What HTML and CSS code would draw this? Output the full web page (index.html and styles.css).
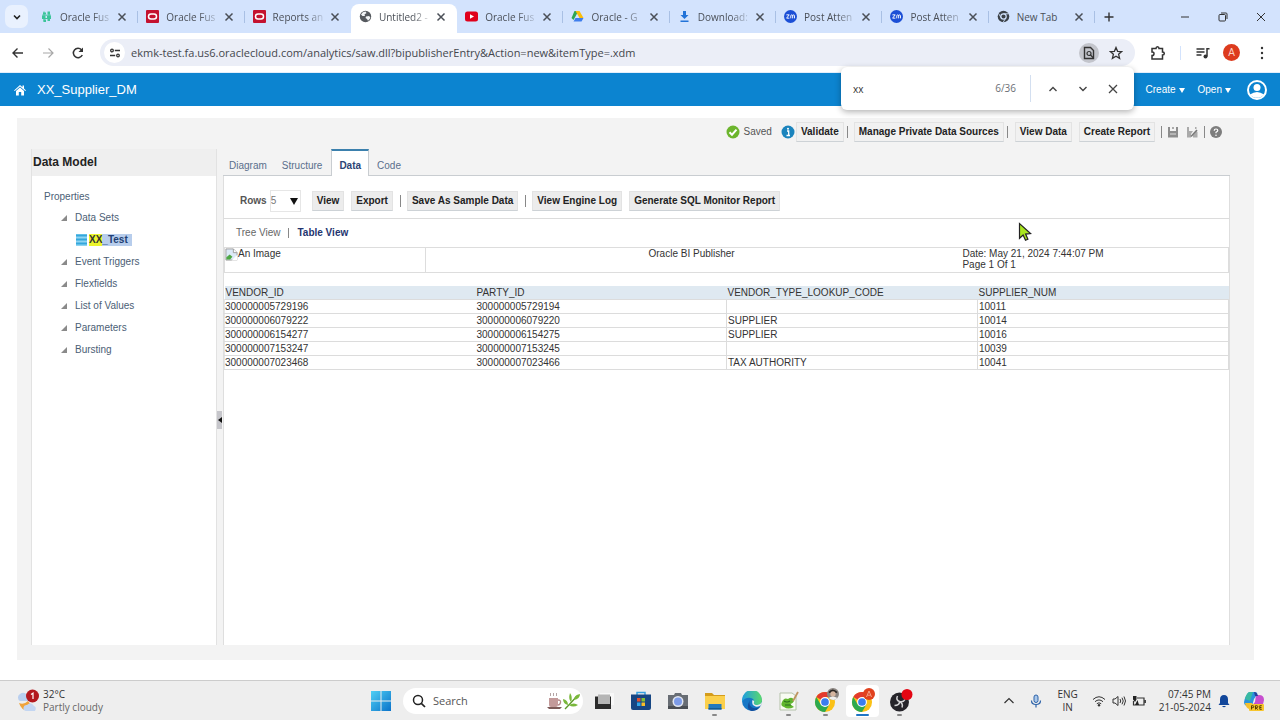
FILE: index.html
```html
<!DOCTYPE html>
<html lang="en">
<head>
<meta charset="utf-8">
<title>XX_Supplier_DM</title>
<link rel="stylesheet" href="styles.css">
</head>
<body>
<svg class="defs" aria-hidden="true">
  <symbol id="x" viewBox="0 0 12 12"><path d="M2.5 2.5l7 7M9.5 2.5l-7 7" fill="none" stroke="currentColor" stroke-width="1.5"/></symbol>
  <symbol id="oracle" viewBox="0 0 13 13"><rect width="13" height="13" rx="1" fill="#c4122f"/><rect x="2.5" y="4" width="8" height="5" rx="2.5" fill="none" stroke="#fff" stroke-width="1.5"/></symbol>
  <symbol id="zoom" viewBox="0 0 14 14"><circle cx="7" cy="7" r="7" fill="#1c4fd6"/><path d="M2.6 5.2h3L2.8 8.8h3M7.3 9V6.2q0-.9 1-.9t1 .9V9M9.3 6.2q0-.9 1-.9t1 .9V9" fill="none" stroke="#fff" stroke-width="1"/></symbol>
  <symbol id="chrome" viewBox="0 0 24 24"><circle cx="12" cy="12" r="11" fill="#fbc116"/><path d="M12 12L2.5 6.5A11 11 0 0 1 21.5 6.5H12z" fill="#e33b2e"/><path d="M2.5 6.5A11 11 0 0 0 12 23l4.8-8.3L12 12 7.3 14.700z" fill="#2da94f"/><circle cx="12" cy="12" r="5.4" fill="#fff"/><circle cx="12" cy="12" r="4.200" fill="#3b7ded"/></symbol>
  <symbol id="node" viewBox="0 0 8 8"><path d="M7 1v6H1z" fill="#8a8a8a"/></symbol>
</svg>

<header class="tabstrip">
  <button class="tab-search" aria-label="Search tabs"><svg width="10" height="10" viewBox="0 0 10 10"><path d="M2 3.500l3 3 3-3" fill="none" stroke="#222" stroke-width="1.600"/></svg></button>
  <div class="tabs">
    <div class="tab"><svg class="fav" viewBox="0 0 13 13"><path d="M3 2.500h3v2H3zM7.500 1.500h2.500v3H7.500zM2 6h3.500v2H2zM7 6h4v2H7zM3.500 9.500h2.500V12H3.500zM7.500 9h2.500v2H7.500z" fill="#3cc49a"/><path d="M4 1.500v10M9 2v9M2 5.200h9M2 8.500h9" stroke="#3cc49a"/></svg><span class="tab-title">Oracle Fus</span><button class="close" aria-label="Close tab"><svg><use href="#x"/></svg></button></div>
    <div class="tab"><svg class="fav"><use href="#oracle"/></svg><span class="tab-title">Oracle Fus</span><button class="close" aria-label="Close tab"><svg><use href="#x"/></svg></button></div>
    <div class="tab before-active"><svg class="fav"><use href="#oracle"/></svg><span class="tab-title">Reports an</span><button class="close" aria-label="Close tab"><svg><use href="#x"/></svg></button></div>
    <div class="tab active"><svg class="fav" viewBox="0 0 13 13"><circle cx="6.500" cy="6.500" r="5.700" fill="#55595e"/><path d="M2 4.500q1.500-2.800 4.500-3l1 1.500-2 1.500.5 1.500H3.500zM7 6.500l3-.5 1.300 1.200q-.3 2.500-2.300 3.500L8 9 6.500 8z" fill="#f2f4f6"/></svg><span class="tab-title">Untitled2 -</span><button class="close" aria-label="Close tab"><svg><use href="#x"/></svg></button></div>
    <div class="tab"><svg class="fav" viewBox="0 0 13 13"><rect y="1.500" width="13" height="10" rx="2.500" fill="#e0001b"/><path d="M5 4.300v4.400l4-2.200z" fill="#fff"/></svg><span class="tab-title">Oracle Fus</span><button class="close" aria-label="Close tab"><svg><use href="#x"/></svg></button></div>
    <div class="tab"><svg class="fav" viewBox="0 0 13 13"><path d="M4.500 1h4l-5 9L1.500 8z" fill="#2fa653" transform="translate(-1)"/><path d="M4.500 1h4l4 7h-4z" fill="#fbbd0a"/><path d="M4.500 8h8l-2 3.500h-8z" fill="#3f7eed"/></svg><span class="tab-title">Oracle - G</span><button class="close" aria-label="Close tab"><svg><use href="#x"/></svg></button></div>
    <div class="tab"><svg class="fav" viewBox="0 0 13 13"><path d="M5 1h3v4h2.500l-4 4-4-4H5zM2.500 10.500h8V12h-8z" fill="#2273d8"/></svg><span class="tab-title">Download:</span><button class="close" aria-label="Close tab"><svg><use href="#x"/></svg></button></div>
    <div class="tab"><svg class="fav"><use href="#zoom"/></svg><span class="tab-title">Post Atten</span><button class="close" aria-label="Close tab"><svg><use href="#x"/></svg></button></div>
    <div class="tab"><svg class="fav"><use href="#zoom"/></svg><span class="tab-title">Post Atten</span><button class="close" aria-label="Close tab"><svg><use href="#x"/></svg></button></div>
    <div class="tab"><svg class="fav" viewBox="0 0 13 13"><circle cx="6.500" cy="6.500" r="5.800" fill="#3c4248"/><circle cx="6.500" cy="6.500" r="2.700" fill="#3c4248" stroke="#d3e3fd" stroke-width="1.200"/><path d="M6.500 3.800h5.300M4.200 7.900L1.500 3.400M8.800 7.900L6.200 12.300" stroke="#d3e3fd" stroke-width=".9"/></svg><span class="tab-title whole">New Tab</span><button class="close" aria-label="Close tab"><svg><use href="#x"/></svg></button></div>
  </div>
  <button class="new-tab" aria-label="New tab"><svg width="12" height="12" viewBox="0 0 12 12"><path d="M6 1.500v9M1.500 6h9" stroke="#333" stroke-width="1.400"/></svg></button>
  <div class="window-controls">
    <button aria-label="Minimize"><svg width="10" height="10" viewBox="0 0 10 10"><path d="M1 5h8" stroke="#333"/></svg></button>
    <button aria-label="Restore"><svg width="10" height="10" viewBox="0 0 10 10"><rect x="1" y="2.500" width="6.500" height="6.500" rx="1" fill="none" stroke="#333"/><path d="M3 1h5q1 0 1 1v5" fill="none" stroke="#333"/></svg></button>
    <button aria-label="Close window"><svg width="10" height="10" viewBox="0 0 10 10"><path d="M1 1l8 8M9 1L1 9" stroke="#333"/></svg></button>
  </div>
</header>

<nav class="toolbar">
  <button aria-label="Back"><svg width="14" height="14" viewBox="0 0 14 14"><path d="M12 7H2.500M6.500 2.500L2 7l4.500 4.500" fill="none" stroke="#333" stroke-width="1.400"/></svg></button>
  <button aria-label="Forward"><svg width="14" height="14" viewBox="0 0 14 14"><path d="M2 7h9.500M7.500 2.500L12 7l-4.500 4.500" fill="none" stroke="#a8a8a8" stroke-width="1.200"/></svg></button>
  <button aria-label="Reload"><svg width="14" height="14" viewBox="0 0 14 14"><path d="M11.300 9A4.700 4.700 0 1 1 10.500 3.700L11.500 5" fill="none" stroke="#333" stroke-width="1.500"/><path d="M12 1.500V6H7.500z" fill="#333"/></svg></button>
  <div class="omnibox">
    <button class="site-info" aria-label="Site information"><svg width="12" height="12" viewBox="0 0 12 12"><g fill="none" stroke="#333" stroke-width="1.300"><circle cx="3" cy="3.500" r="1.300"/><path d="M5.800 3.500H11M1 8.500h5.200"/><circle cx="9" cy="8.500" r="1.300"/></g></svg></button>
    <input class="url" aria-label="Address" value="ekmk-test.fa.us6.oraclecloud.com/analytics/saw.dll?bipublisherEntry&amp;Action=new&amp;itemType=.xdm">
    <button class="find-chip" aria-label="Find in page"><svg width="14" height="14" viewBox="0 0 14 14"><path d="M2.500 1.500h6l3 3v8h-9z" fill="none" stroke="#333" stroke-width="1.400"/><circle cx="7" cy="7.500" r="2" fill="none" stroke="#333" stroke-width="1.200"/><path d="M8.500 9l3 3" stroke="#333" stroke-width="1.200"/></svg></button>
    <button class="star" aria-label="Bookmark"><svg width="14" height="14" viewBox="0 0 14 14"><path d="M7 1.500l1.600 3.800 4.100.3-3.100 2.700 1 4L7 10.200l-3.600 2.100 1-4L1.300 5.600l4.100-.3z" fill="none" stroke="#333" stroke-width="1.300"/></svg></button>
  </div>
  <div class="toolbar-end">
    <button aria-label="Extensions"><svg width="16" height="16" viewBox="0 0 16 16"><path d="M2 3.500h4q0-1.800 1.500-1.800T9 3.500h3.500V7q1.800 0 1.800 1.500T12.500 10v4H2v-3.500q2 0 2-1.800T2 7z" fill="none" stroke="#333" stroke-width="1.500"/></svg></button>
    <span class="bar"></span>
    <button aria-label="Media controls"><svg width="16" height="16" viewBox="0 0 16 16"><path d="M1.500 4h8M1.500 7h8M1.500 10h5M12 11.500V3.700h2.500" fill="none" stroke="#333" stroke-width="1.500"/><circle cx="10.500" cy="11.500" r="2" fill="#333"/></svg></button>
    <button class="avatar" aria-label="Profile">A</button>
    <button aria-label="Menu"><svg width="4" height="14" viewBox="0 0 4 14" fill="#333"><circle cx="2" cy="2" r="1.200"/><circle cx="2" cy="7" r="1.200"/><circle cx="2" cy="12" r="1.200"/></svg></button>
  </div>
  <div class="findbar" role="search">
    <input aria-label="Find" value="xx">
    <span class="count">6/36</span>
    <button aria-label="Previous"><svg width="12" height="12" viewBox="0 0 12 12"><path d="M2.500 8L6 4.500 9.500 8" fill="none" stroke="#444" stroke-width="1.400"/></svg></button>
    <button aria-label="Next"><svg width="12" height="12" viewBox="0 0 12 12"><path d="M2.500 4L6 7.500 9.500 4" fill="none" stroke="#444" stroke-width="1.400"/></svg></button>
    <button aria-label="Close find bar"><svg width="12" height="12" viewBox="0 0 12 12"><path d="M2 2l8 8M10 2l-8 8" stroke="#444" stroke-width="1.300"/></svg></button>
  </div>
</nav>

<header class="app-header">
  <a href="#" aria-label="Home"><svg width="12" height="12" viewBox="0 0 12 12"><path d="M0 6.500L6 1l2.500 2.200V1.500H10v3l2 2-.8.600L6 2.600.8 7.100zM2 7l4-3.500L10 7v4.500H7.200V8H4.800v3.500H2z" fill="#fff"/></svg></a>
  <h1>XX_Supplier_DM</h1>
  <button>Create <i class="caret"></i></button>
  <button>Open <i class="caret"></i></button>
  <button class="user" aria-label="User"><svg width="20" height="20" viewBox="0 0 20 20"><circle cx="10" cy="10" r="9" fill="none" stroke="#fff" stroke-width="2"/><circle cx="10" cy="7.500" r="3.500" fill="#fff"/><path d="M3 14.500q7-5 14 0a9 9 0 0 1-14 0z" fill="#fff"/></svg></button>
</header>

<main class="workspace">
  <div class="actions">
    <span class="status"><svg width="14" height="14" viewBox="0 0 14 14"><circle cx="7" cy="7" r="6.500" fill="#6cb52d"/><path d="M3.500 7.200l2.500 2.500 4.500-5" fill="none" stroke="#fff" stroke-width="2"/></svg>Saved</span>
    <svg class="info" width="14" height="14" viewBox="0 0 14 14"><circle cx="7" cy="7" r="6.500" fill="#1b84bd"/><path d="M6 6h1.700v4.500M5.500 10.500h3.500" fill="none" stroke="#fff" stroke-width="1.300"/><circle cx="7" cy="3.700" r="1" fill="#fff"/></svg>
    <button class="btn validate">Validate</button><span class="sep"></span>
    <button class="btn manage">Manage Private Data Sources</button><span class="sep"></span>
    <button class="btn view-data">View Data</button>
    <button class="btn create-report">Create Report</button><span class="sep"></span>
    <button class="icon-btn" aria-label="Save"><svg width="12" height="12" viewBox="0 0 12 12"><path d="M1 1h2v4h6V1h2v10.500H1z" fill="#8d8d8d"/><path d="M5 1h2v2H5z" fill="#aaa"/><path d="M3 8h6" stroke="#ddd"/></svg></button>
    <button class="icon-btn" aria-label="Save as"><svg width="12" height="12" viewBox="0 0 12 12"><path d="M1 1h2v4h4L5 8v3.500H1zM9 1h1.500v2H9zM7 11.500V9l3.500-4 1 1V11.500z" fill="#aaa"/><path d="M5 10.500l6-6.500" stroke="#777" stroke-width="1.500"/></svg></button><span class="sep last"></span>
    <button class="icon-btn" aria-label="Help"><svg width="12" height="12" viewBox="0 0 12 12"><circle cx="6" cy="6" r="6" fill="#7d7d7d"/><path d="M4.200 4.700q0-1.700 1.800-1.700t1.800 1.500q0 1-1.800 1.800v1" fill="none" stroke="#fff" stroke-width="1.200"/><circle cx="6" cy="9.200" r=".8" fill="#fff"/></svg></button>
  </div>

  <div class="panes">
    <aside class="model">
      <h2>Data Model</h2>
      <ul class="tree">
        <li class="root"><a href="#">Properties</a></li>
        <li><svg class="node"><use href="#node"/></svg><a href="#">Data Sets</a></li>
        <li class="leaf"><svg width="11" height="12" viewBox="0 0 11 12"><path d="M0 0h11v12H0z" fill="#8fd4f2"/><path d="M0 1.500h11M0 5.500h11M0 9.500h11" stroke="#35a7dc" stroke-width="2"/></svg><a href="#" class="selected"><mark>XX</mark>_Test</a></li>
        <li><svg class="node"><use href="#node"/></svg><a href="#">Event Triggers</a></li>
        <li><svg class="node"><use href="#node"/></svg><a href="#">Flexfields</a></li>
        <li><svg class="node"><use href="#node"/></svg><a href="#">List of Values</a></li>
        <li><svg class="node"><use href="#node"/></svg><a href="#">Parameters</a></li>
        <li><svg class="node"><use href="#node"/></svg><a href="#">Bursting</a></li>
      </ul>
    </aside>
    <div class="splitter"><button aria-label="Collapse panel"><svg width="4" height="6" viewBox="0 0 4 6"><path d="M4 0v6L0 3z" fill="#111"/></svg></button></div>
    <section class="editor">
      <div class="editor-tabs" role="tablist">
        <button role="tab">Diagram</button><button role="tab">Structure</button><button role="tab" aria-selected="true" class="current">Data</button><button role="tab">Code</button>
      </div>
      <div class="sheet">
        <div class="controls">
          <label for="rows">Rows</label>
          <span class="select"><select id="rows"><option>5</option></select><svg width="8" height="8" viewBox="0 0 8 8"><path d="M0 1h8L4 8z" fill="#111"/></svg></span>
          <button class="btn">View</button>
          <button class="btn">Export</button><span class="sep"></span>
          <button class="btn">Save As Sample Data</button><span class="sep"></span>
          <button class="btn">View Engine Log</button>
          <button class="btn">Generate SQL Monitor Report</button>
        </div>
        <div class="views"><a href="#">Tree View</a><span class="sep"></span><a href="#" class="on">Table View</a></div>
        <table class="report-head">
          <tr>
            <td class="logo"><span><svg width="13" height="13" viewBox="0 0 14 14"><path d="M1 1h8l4 4v8H1z" fill="#dce9f7" stroke="#9a9a9a"/><path d="M9 1v4h4" fill="#fff" stroke="#9a9a9a"/><path d="M1.500 12.500V10L5 7l3 2.500L5.500 12.500z" fill="#4da845"/><path d="M7 13.500L13.500 7v6.500z" fill="#fff"/></svg>An Image</span></td>
            <td class="name">Oracle BI Publisher</td>
            <td class="stamp">Date: May 21, 2024 7:44:07 PM<br>Page 1 Of 1</td>
          </tr>
        </table>
        <table class="grid">
          <thead><tr><th>VENDOR_ID</th><th>PARTY_ID</th><th>VENDOR_TYPE_LOOKUP_CODE</th><th>SUPPLIER_NUM</th></tr></thead>
          <tbody>
            <tr><td>300000005729196</td><td>300000005729194</td><td></td><td>10011</td></tr>
            <tr><td>300000006079222</td><td>300000006079220</td><td>SUPPLIER</td><td>10014</td></tr>
            <tr><td>300000006154277</td><td>300000006154275</td><td>SUPPLIER</td><td>10016</td></tr>
            <tr><td>300000007153247</td><td>300000007153245</td><td></td><td>10039</td></tr>
            <tr><td>300000007023468</td><td>300000007023466</td><td>TAX AUTHORITY</td><td>10041</td></tr>
          </tbody>
        </table>
      </div>
    </section>
  </div>
</main>

<footer class="taskbar">
  <button class="weather">
    <svg width="24" height="24" viewBox="0 0 24 24"><path d="M4 12a4 4 0 0 1 0-7q4-3 7 1l2 6z" fill="#b9cfef"/><path d="M3 14q5 2 9-2 4 4 2 9-8 2-11-7z" fill="#efa33c"/><path d="M10 22a3 3 0 0 1 1-6q4-4 7 1 3 1 1 5z" fill="#c3d6f2"/><circle cx="16.500" cy="7" r="6.500" fill="#b3191f"/><path d="M15 5.500l2-1.300V10" fill="none" stroke="#fff" stroke-width="1.200"/></svg>
    <span>32°C<small>Partly cloudy</small></span>
  </button>
  <div class="dock">
    <button class="start" aria-label="Start"><svg width="20" height="20" viewBox="0 0 20 20"><defs><linearGradient id="w" x2="1" y2="1"><stop stop-color="#4fd0f5"/><stop offset="1" stop-color="#0b72c9"/></linearGradient></defs><path d="M0 0h9.500v9.500H0zM10.500 0H20v9.500h-9.500zM0 10.500h9.500V20H0zM10.500 10.500H20V20h-9.500z" fill="url(#w)"/></svg></button>
    <label class="search"><svg width="14" height="14" viewBox="0 0 14 14"><circle cx="6" cy="6" r="4.500" fill="none" stroke="#222" stroke-width="1.500"/><path d="M9.300 9.300L13 13" stroke="#222" stroke-width="1.700"/></svg><input placeholder="Search" aria-label="Search"><svg width="34" height="18" viewBox="0 0 34 18"><path d="M1 15h15l-2 2H3z" fill="#7c5a58"/><path d="M3 6h9v7q0 2-2 2H5q-2 0-2-2z" fill="#c39a9a"/><path d="M12 8q3 0 2.500 2.500T12 13" fill="none" stroke="#b58a8a" stroke-width="1.300"/><path d="M4.500 4V1M7.500 4V1M10.500 4V1" stroke="#b5a5a5"/><path d="M19 17Q24 12 31 4" fill="none" stroke="#5d9a2a" stroke-width="1.300"/><path d="M22 13q-5-1-5-6 5 1 5 6zM25 10q-3-3-1-9 3 4 1 9zM28 8q0-5 6-6 0 5-6 6zM23 13q5-3 9 0-5 3-9 0z" fill="#7ab83c"/></svg></label>
    <button class="app" aria-label="Task view"><svg width="20" height="20" viewBox="0 0 20 20"><path d="M6 2h14v12H6z" fill="#f8f8f8"/><path d="M1 5.500h16V18H1z" fill="#2b2b2b"/><path d="M4 3.500h12V13H4z" fill="#b5b5b5"/></svg></button>
    <button class="app" aria-label="Store"><svg width="20" height="20" viewBox="0 0 20 20"><path d="M6 4V1.500h8V4" fill="none" stroke="#35a0e0" stroke-width="1.500"/><path d="M0 3.500h20V17q0 2-2 2H2q-2 0-2-2z" fill="#174683"/><path d="M6 7h3.500v3.500H6z" fill="#e35132"/><path d="M10.500 7H14v3.500h-3.500z" fill="#83bf35"/><path d="M6 11.500h3.500V15H6z" fill="#31a7ea"/><path d="M10.500 11.500H14V15h-3.500z" fill="#f7bd29"/></svg></button>
    <button class="app" aria-label="Camera"><svg width="20" height="20" viewBox="0 0 20 20"><path d="M0 4h6l1-2h6l1 2h6v14H0z" fill="#686d74"/><path d="M0 15h20v3H0z" fill="#4a4e54"/><circle cx="10" cy="10.500" r="5.500" fill="#e2e6f0"/><circle cx="10" cy="10.500" r="4" fill="#7d9be8"/></svg></button>
    <button class="app running" aria-label="File Explorer"><svg width="20" height="20" viewBox="0 0 20 20"><path d="M0 2h7l2 2h11v14H0z" fill="#d49c1c"/><path d="M0 5h20v13H0z" fill="#fbd04c"/><path d="M3.500 13h13v5.500h-13z" fill="#2379bd"/><path d="M3.500 17h13v1.500h-13z" fill="#155b92"/></svg></button>
    <button class="app" aria-label="Edge"><svg width="20" height="20" viewBox="0 0 20 20"><defs><linearGradient id="e" x2="1"><stop stop-color="#1e9de0"/><stop offset="1" stop-color="#5bd96c"/></linearGradient></defs><circle cx="10" cy="10" r="10" fill="#1677c6"/><path d="M0 9A10 10 0 0 1 20 9q0 5-5 5-4 0-3.500-2.500Q13 8 9 7 3 6 0 11z" fill="url(#e)"/><path d="M8 9q-2 6 3.500 8 4 1 7-2a10 10 0 0 1-9 5Q3 18 8 9z" fill="#134f9e"/><path d="M10.500 9q-1.500 5 3 6.500 3 1 6-1.500l.5-3q-2 3.500-5.500 3T12 11q1-1-1.500-2z" fill="#eee"/></svg></button>
    <button class="app running" aria-label="Notepad++"><svg width="20" height="20" viewBox="0 0 20 20"><path d="M1 2h12l4 3v14H1z" fill="#f8fbf2" stroke="#b4c2a9"/><path d="M3 11q2-5 6-3 4-3 6 1 0 3-4 4l4 3q-6 3-10 0-4-1-2-5z" fill="#61b62e"/><path d="M5 10q3 2 6 0M6 14h6" fill="none" stroke="#286d20" stroke-width="1.200"/><path d="M19 1l-5 9" stroke="#be9460" stroke-width="1.800"/></svg></button>
    <button class="app running" aria-label="Chrome profile 1"><svg width="26" height="26" viewBox="0 0 26 26"><svg x="1" y="3" width="22" height="22"><use href="#chrome"/></svg><circle cx="20" cy="6" r="6" fill="#8b8581"/><path d="M15.500 4q4-5 9 0l-1 1h-7z" fill="#292522"/><circle cx="20" cy="6" r="2.700" fill="#d5b59f"/><path d="M15.500 10q4-3 9 0-4 4-9 0z" fill="#f0f0ee"/></svg></button>
    <button class="app running current" aria-label="Chrome profile 2"><svg width="26" height="26" viewBox="0 0 26 26"><svg x="1" y="3" width="22" height="22"><use href="#chrome"/></svg><circle cx="19" cy="6" r="6" fill="#e1421f"/><path d="M16.500 9L19 3l2.500 6M17.500 7.200h3" fill="none" stroke="#f5a28a"/></svg></button>
    <button class="app running" aria-label="OBS Studio"><svg width="26" height="26" viewBox="0 0 26 26"><circle cx="12.500" cy="14" r="9.500" fill="#25242a"/><path d="M10.500 8q-2 4 2 5.500 4 1 5.500-2M12.500 13.500q0 4-5 4M12.500 13.500q4 2 2.500 6" fill="none" stroke="#d4d4d6" stroke-width="1.500"/><circle cx="20" cy="6.500" r="5.500" fill="#e30613"/></svg></button>
  </div>
  <div class="tray">
    <button aria-label="Show hidden icons"><svg width="12" height="12" viewBox="0 0 12 12"><path d="M1.500 8L6 3.500 10.500 8" fill="none" stroke="#333" stroke-width="1.200"/></svg></button>
    <button class="mic" aria-label="Microphone"><svg width="12" height="14" viewBox="0 0 12 14"><rect x="4" y="1" width="4" height="7.500" rx="2" fill="#a9c7ea" stroke="#2c62a8"/><path d="M1.500 6.500q0 4 4.500 4t4.500-4M6 10.500V13.500" fill="none" stroke="#2c62a8" stroke-width="1.200"/></svg></button>
    <span class="lang">ENG<br>IN</span>
    <button class="net" aria-label="Network, volume and battery"><svg width="14" height="12" viewBox="0 0 14 12"><path d="M1 4.500q6-5.500 12 0M3 6.700q4-3.500 8 0M4.800 8.700q2.200-1.800 4.400 0" fill="none" stroke="#333"/><circle cx="7" cy="10.300" r="1.200" fill="#333"/></svg><svg width="14" height="12" viewBox="0 0 14 12"><path d="M1 4h2l3-2.500v9L3 8H1zM8 4q1.500 2 0 4M10 2.700q2.500 3.300 0 6.600M12 1.500q3 4.500 0 9" fill="none" stroke="#333"/></svg><svg width="14" height="12" viewBox="0 0 14 12"><path d="M5 3h7v7H1.500V6M13.300 5v3" fill="none" stroke="#333" stroke-width="1.200"/><path d="M1 1h3.500v3.500L3 7 1 4.500zM5.500 5l-2.500 5h4z" fill="#222"/></svg></button>
    <span class="clock">07:45 PM<br>21-05-2024</span>
    <button aria-label="Notifications"><svg width="12" height="14" viewBox="0 0 12 14"><path d="M2 9V5.500q0-4.500 4-4.500t4 4.500V9l1.500 2H.5zM4 12h4q-2 2.500-4 0z" fill="#12479b"/></svg></button>
    <button class="copilot" aria-label="Copilot preview"><svg width="20" height="20" viewBox="0 0 20 20"><path d="M5 1h6q2 0 2.500 2L10 8l-2 7H4q-4 0-4-4 1-6 5-10z" fill="#2a93dd"/><path d="M1 8q1-5 4-7h4L6 10z" fill="#39b9a2"/><path d="M12 4h3q5 0 5 5-1 7-5 9H9q-2 0-2-2l4-5z" fill="#c74fcf"/><path d="M10 1q3 0 4 4h-3z" fill="#283f9c"/><path d="M1 12h7l1 6H5q-3-1-4-6z" fill="#f4bf31"/><rect x="5" y="13" width="15" height="7" rx="1" fill="#f7c52c"/><path d="M7.500 18.500V14.700h1.300q1 0 1 1t-1 1H7.500M11.500 18.500V14.700h1.300q1 0 1 1t-1 1h-1.300l2.300 1.800M17.800 14.700h-2v3.600h2M15.800 16.500h1.700" fill="none" stroke="#4a3600" stroke-width=".9"/></svg></button>
  </div>
</footer>

<svg class="cursor" width="14" height="20" viewBox="0 0 14 20" aria-hidden="true"><path d="M1.500 1.500v14.800l3.600-3.300 2.400 5.300 2.400-1.100-2.300-5.100 5-.5z" fill="#a9e61e" stroke="#222" stroke-width="1.200"/></svg>
</body>
</html>
```
FILE: styles.css
```css
* { box-sizing: border-box; }
body {
  margin: 0;
  min-height: 100vh;
  display: flex;
  flex-direction: column;
  background: #fff;
  color: #333;
  font: 10px/14px "Liberation Sans", Arial, sans-serif;
}
button, input, select { font: inherit; color: inherit; border: 0; background: none; padding: 0; margin: 0; outline: 0; }
button { display: inline-flex; align-items: center; justify-content: center; flex: none; white-space: nowrap; }
a { color: inherit; text-decoration: none; }
svg { display: block; flex: none; }
.defs { position: absolute; width: 0; height: 0; }

/* Browser tabs */
.tabstrip { display: flex; height: 33px; background: #d3e3fd; font: 10px/16px "Open Sans", sans-serif; color: #4a4f57; }
.tab-search { width: 23px; height: 23px; margin: 5px 4px 0 5px; border-radius: 7px; background: #e9f1fe; }
.tabs { flex: 0 1 1063px; min-width: 0; display: flex; }
.tab { position: relative; flex: 1; min-width: 0; display: flex; align-items: center; padding: 0 10px 0 8px; }
.tab::after { content: ""; position: absolute; right: 0; top: 11px; height: 12px; border-right: 1px solid #a9c0e4; }
.tab.active { background: #fff; border-radius: 8px 8px 0 0; margin-top: 4px; padding-bottom: 4px; }
.tab.active::after, .tab.before-active::after { display: none; }
.fav { width: 13px; height: 13px; margin-right: 7px; }
.tab-title { flex: 1; min-width: 0; overflow: hidden; white-space: nowrap; margin-right: 2px; -webkit-mask-image: linear-gradient(90deg, #000 60%, transparent); mask-image: linear-gradient(90deg, #000 60%, transparent); }
.tab-title.whole { -webkit-mask-image: none; mask-image: none; }
.close svg { width: 12px; height: 12px; }
.new-tab { width: 28px; }
.window-controls { margin-left: auto; display: flex; }
.window-controls button { width: 38px; }

/* Address bar */
.toolbar { position: relative; z-index: 2; display: flex; align-items: center; height: 40px; padding: 0 16px 0 3px; border-bottom: 1px solid #e3eefb; }
.toolbar > button { width: 30px; }
.omnibox { flex: 1; display: flex; align-items: center; height: 27px; margin-left: 7px; padding: 0 12px 0 4px; border-radius: 14px; background: #ebeef7; }
.site-info { width: 21px; height: 21px; border-radius: 50%; background: #fff; }
.url { flex: 1; min-width: 0; margin-left: 6px; font: 11px/18px "Open Sans", sans-serif; color: #44474d; }
.find-chip { width: 20px; height: 20px; border-radius: 50%; background: #c3c5cc; }
.star { margin-left: 10px; }
.toolbar-end { display: flex; align-items: center; margin-left: 15px; }
.bar { height: 14px; margin: 0 14px; border-left: 1px solid #d3e3fd; }
.avatar { width: 17px; height: 17px; margin: 0 20px 0 12px; border-radius: 50%; background: #dd3b1e; color: #fbd0c4; }
.findbar { position: absolute; right: 146px; top: 34px; width: 293px; height: 43px; display: flex; align-items: center; padding: 0 6px 0 12px; border-radius: 6px; background: #fff; box-shadow: 0 2px 6px rgba(0,0,0,.3); font: 10px/16px "Open Sans", sans-serif; }
.findbar input { flex: 1; min-width: 0; }
.count { color: #6b6f75; padding-right: 14px; margin-right: 7px; line-height: 27px; border-right: 1px solid #d3dff0; }
.findbar button { width: 30px; }

/* Application header */
.app-header { display: flex; align-items: center; height: 33px; padding: 0 13px 0 14px; background: #0c84d0; color: #fff; }
.app-header h1 { flex: 1; margin: 0 0 0 11px; font-size: 13px; line-height: 16px; font-weight: 400; }
.app-header button { margin-right: 13px; }
.app-header .user { margin: 0 0 0 3px; }
.caret { margin: 2px 0 0 3px; border: 3px solid transparent; border-top: 5px solid #fff; border-bottom: 0; }

/* Data model workspace */
.workspace { flex: 1; display: flex; flex-direction: column; margin: 12px 26px 20px 17px; padding: 4px 24px 15px 14px; background: #f3f3f3; }
.actions { display: flex; align-items: center; justify-content: flex-end; height: 20px; padding-right: 8px; }
.btn { height: 20px; padding: 0 4px; border: 1px solid #e3e3e3; border-bottom-color: #cdd2d6; background: #ececec; color: #222; font-weight: 700; }
.actions .btn { background: #f1f1f1; }
.sep { height: 12px; border-left: 1px solid #888; }
.status { display: flex; gap: 4px; margin-right: 9px; color: #555; }
.info { margin-right: 1px; }
.validate { margin-right: 3px; }
.manage { margin: 0 3px 0 6px; }
.view-data { margin: 0 7px; }
.create-report { margin-right: 6px; }
.icon-btn { width: 12px; margin-left: 7px; }
.sep + .icon-btn { margin-left: 5px; }
.sep.last { margin-left: 6px; }
.panes { flex: 1; display: flex; margin-top: 7px; }
.model { width: 186px; flex: none; background: #fff; border: 1px solid #e2e2e2; border-top: 0; border-bottom: 0; }
.model h2 { margin: 0; padding: 0 1px; font-size: 12px; line-height: 27px; background: #efefef; color: #222; }
.tree { list-style: none; margin: 0; padding: 10px 12px; color: #4b6075; }
.tree li { display: flex; align-items: center; height: 22px; padding-left: 16px; }
.tree .root { padding-left: 0; height: 21px; }
.tree .leaf { padding-left: 32px; }
.node { width: 8px; height: 8px; margin-right: 7px; }
.selected { margin-left: 2px; padding-right: 4px; line-height: 12px; background: #b7cdec; color: #223f73; font-weight: 700; }
.selected mark { display: inline-block; background: #ecf52c; color: #333; }
.splitter { width: 6px; flex: none; display: flex; align-items: center; padding-top: 46px; }
.splitter button { width: 5px; height: 18px; background: #c6c6cb; }
.editor { flex: 1; min-width: 0; display: flex; flex-direction: column; }
.editor-tabs { display: flex; height: 27px; color: #5a6f8c; border-bottom: 1px solid #c9cdd1; }
.editor-tabs button { padding: 6px 9px 0 6px; height: 27px; }
.editor-tabs .current { padding: 4px 7px 0; border: 1px solid #c9cdd1; border-top: 2px solid #3b80ad; border-bottom: 0; background: #fff; color: #2c4575; font-weight: 700; }
.editor-tabs .current + button { padding-left: 8px; }
.sheet { flex: 1; background: #fff; border: solid #dedede; border-width: 0 1px; }
.controls { display: flex; align-items: center; height: 43px; padding: 7px 16px 0; border-bottom: 1px solid #dcdcdc; }
.controls label { font-weight: 700; color: #555; margin-right: 3px; }
.controls .btn { margin-right: 7px; }
.controls .sep { margin-right: 6px; }
.select { display: flex; align-items: center; width: 31px; height: 22px; margin-right: 11px; border: 1px solid #e6e6e6; padding-right: 2px; }
.select select { flex: 1; min-width: 0; appearance: none; color: #777; }
.views { display: flex; align-items: center; height: 28px; padding: 0 12px; color: #666; }
.views .sep { margin: 0 8px; height: 10px; }
.views .on { color: #24356f; font-weight: 700; }
table { width: 100%; table-layout: fixed; border-collapse: collapse; }
td, th { padding: 0 1px; text-align: left; font-weight: 400; }
.report-head { line-height: 11px; }
.report-head td { height: 25px; vertical-align: top; border: 1px solid #ddd; }
.report-head .logo { width: 20%; padding-left: 0; }
.report-head .logo span { display: flex; }
.report-head .name { width: 53%; text-align: center; border-left: 0; border-right: 0; }
.report-head .stamp { border-left: 0; padding-left: 5px; }
.grid { margin-top: 13px; line-height: 13px; }
.grid th { background: #dfe9f1; }
.grid td { height: 14px; border: 1px solid #dcdcdc; border-left-color: #e6e6e6; }
.grid td:nth-child(2) { border-left: 0; }
.grid td:first-child { border-right: 0; padding-left: 0; }

/* Windows taskbar */
.taskbar { display: grid; grid-template-columns: 1fr auto 1fr; height: 40px; background: #eee; border-top: 1px solid #ccc; font: 10px/13px "Open Sans", sans-serif; }
.weather { justify-self: start; margin-left: 16px; gap: 3px; text-align: left; }
.weather small { display: block; font-size: 10px; color: #666; }
.dock { position: relative; z-index: 0; display: flex; align-items: center; }
.start { width: 38px; }
.search { width: 180px; height: 26px; margin: 0 2px 0 3px; padding: 0 3px 0 9px; display: flex; align-items: center; gap: 7px; border-radius: 13px; background: #fff; }
.search input { flex: 1; min-width: 0; font-size: 11px; }
.search input::placeholder { color: #555; }
.app { position: relative; width: 37px; height: 36px; }
.app.current::before { content: ""; position: absolute; z-index: -1; inset: 2px; background: #fff; border-radius: 4px; }
.app.running::after { content: ""; position: absolute; bottom: 3px; left: 16px; width: 5px; height: 2px; border-radius: 1px; background: #888; }
.app.running.current::after { left: 12px; width: 13px; background: #1f75c4; }
.tray { display: flex; align-items: center; justify-content: flex-end; padding-right: 16px; }
.mic { margin-left: 15px; }
.lang { margin-left: 15px; text-align: center; }
.net { margin-left: 14px; gap: 6px; }
.clock { margin: 0 7px 0 13px; text-align: right; }
.copilot { margin-left: 14px; }

.cursor { position: absolute; left: 1018px; top: 222px; z-index: 3; }
```
